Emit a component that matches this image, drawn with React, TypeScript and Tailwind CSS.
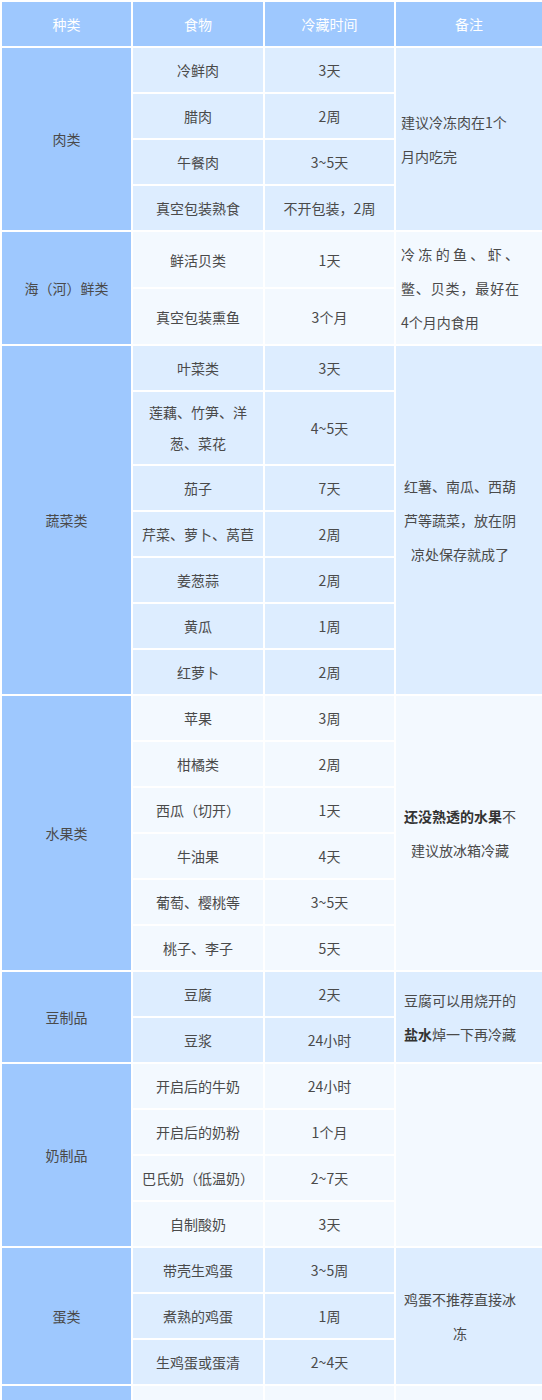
type Item = { food: React.ReactNode; time: string; nowrap?: boolean; tight?: boolean };

type Group = {
  name: string;
  tone: 'deep' | 'pale';
  items: Item[];
  note?: React.ReactNode;
  noteAlign?: 'left' | 'justify' | 'center';
};

const groups: Group[] = [
  {
    name: '肉类',
    tone: 'deep',
    items: [
      { food: '冷鲜肉', time: '3天' },
      { food: '腊肉', time: '2周' },
      { food: '午餐肉', time: '3~5天' },
      { food: '真空包装熟食', time: '不开包装，2周' },
    ],
    note: '建议冷冻肉在1个月内吃完',
    noteAlign: 'left',
  },
  {
    name: '海（河）鲜类',
    tone: 'pale',
    items: [
      { food: '鲜活贝类', time: '1天' },
      { food: '真空包装熏鱼', time: '3个月' },
    ],
    note: '冷冻的鱼、虾、鳖、贝类，最好在4个月内食用',
    noteAlign: 'justify',
  },
  {
    name: '蔬菜类',
    tone: 'deep',
    items: [
      { food: '叶菜类', time: '3天' },
      {
        food: (
          <>
            莲藕、竹笋、洋
            <br />
            葱、菜花
          </>
        ),
        time: '4~5天',
        tight: true,
      },
      { food: '茄子', time: '7天' },
      { food: '芹菜、萝卜、莴苣', time: '2周', nowrap: true },
      { food: '姜葱蒜', time: '2周' },
      { food: '黄瓜', time: '1周' },
      { food: '红萝卜', time: '2周' },
    ],
    note: '红薯、南瓜、西葫芦等蔬菜，放在阴凉处保存就成了',
    noteAlign: 'center',
  },
  {
    name: '水果类',
    tone: 'pale',
    items: [
      { food: '苹果', time: '3周' },
      { food: '柑橘类', time: '2周' },
      { food: '西瓜（切开）', time: '1天' },
      { food: '牛油果', time: '4天' },
      { food: '葡萄、樱桃等', time: '3~5天' },
      { food: '桃子、李子', time: '5天' },
    ],
    note: (
      <>
        <strong className="font-bold text-[#333]">还没熟透的水果</strong>不建议放冰箱冷藏
      </>
    ),
    noteAlign: 'center',
  },
  {
    name: '豆制品',
    tone: 'deep',
    items: [
      { food: '豆腐', time: '2天' },
      { food: '豆浆', time: '24小时' },
    ],
    note: (
      <>
        豆腐可以用烧开的<strong className="font-bold text-[#333]">盐水</strong>焯一下再冷藏
      </>
    ),
    noteAlign: 'center',
  },
  {
    name: '奶制品',
    tone: 'pale',
    items: [
      { food: '开启后的牛奶', time: '24小时' },
      { food: '开启后的奶粉', time: '1个月' },
      { food: '巴氏奶（低温奶）', time: '2~7天', nowrap: true },
      { food: '自制酸奶', time: '3天' },
    ],
  },
  {
    name: '蛋类',
    tone: 'deep',
    items: [
      { food: '带壳生鸡蛋', time: '3~5周' },
      { food: '煮熟的鸡蛋', time: '1周' },
      { food: '生鸡蛋或蛋清', time: '2~4天' },
    ],
    note: '鸡蛋不推荐直接冰冻',
    noteAlign: 'center',
  },
];

const box = 'border-2 border-white px-[5px] py-[5px] align-middle';
const cell = `${box} leading-[34px]`;

function GroupRows({ group }: { group: Group }) {
  const bg = group.tone === 'deep' ? 'bg-[#ddedff]' : 'bg-[#f3f9ff]';
  const align =
    group.noteAlign === 'justify' ? 'text-justify' : group.noteAlign === 'center' ? 'text-center' : 'text-left';

  return (
    <>
      {group.items.map((item, i) => (
        <tr key={i}>
          {i === 0 && (
            <td rowSpan={group.items.length} className={`${cell} bg-[#9ec8fe] text-center`}>
              {group.name}
            </td>
          )}
          <td
            className={`${item.tight ? `${box} leading-[31px]` : cell} ${bg} text-center ${
              item.nowrap ? 'whitespace-nowrap' : ''
            }`}
          >
            {item.food}
          </td>
          <td className={`${cell} ${bg} text-center`}>{item.time}</td>
          {i === 0 && (
            <td rowSpan={group.items.length} className={`${cell} ${bg} ${align} pr-[23px]`}>
              {group.note}
            </td>
          )}
        </tr>
      ))}
    </>
  );
}

export default function App() {
  return (
    <div
      className="w-[542px] overflow-hidden bg-white text-[14px] text-[#4a4a4a]"
      style={{ fontFamily: '"Noto Sans CJK SC", "Noto Sans", sans-serif' }}
    >
      <table className="w-[542px] table-fixed border-collapse">
        <colgroup>
          <col className="w-[131px]" />
          <col className="w-[132px]" />
          <col className="w-[131px]" />
          <col className="w-[148px]" />
        </colgroup>
        <thead>
          <tr className="bg-[#9ec8fe] text-white">
            <th className={`${cell} font-normal`}>种类</th>
            <th className={`${cell} font-normal`}>食物</th>
            <th className={`${cell} font-normal`}>冷藏时间</th>
            <th className={`${cell} font-normal`}>备注</th>
          </tr>
        </thead>
        <tbody>
          {groups.map((g) => (
            <GroupRows key={g.name} group={g} />
          ))}
          <tr>
            <td rowSpan={2} className={`${cell} bg-[#9ec8fe]`}>&nbsp;</td>
            <td className={`${cell} bg-[#f3f9ff]`}>&nbsp;</td>
            <td className={`${cell} bg-[#f3f9ff]`}>&nbsp;</td>
            <td rowSpan={2} className={`${cell} bg-[#f3f9ff]`}>&nbsp;</td>
          </tr>
          <tr>
            <td className={`${cell} bg-[#f3f9ff]`}>&nbsp;</td>
            <td className={`${cell} bg-[#f3f9ff]`}>&nbsp;</td>
          </tr>
        </tbody>
      </table>
    </div>
  );
}
